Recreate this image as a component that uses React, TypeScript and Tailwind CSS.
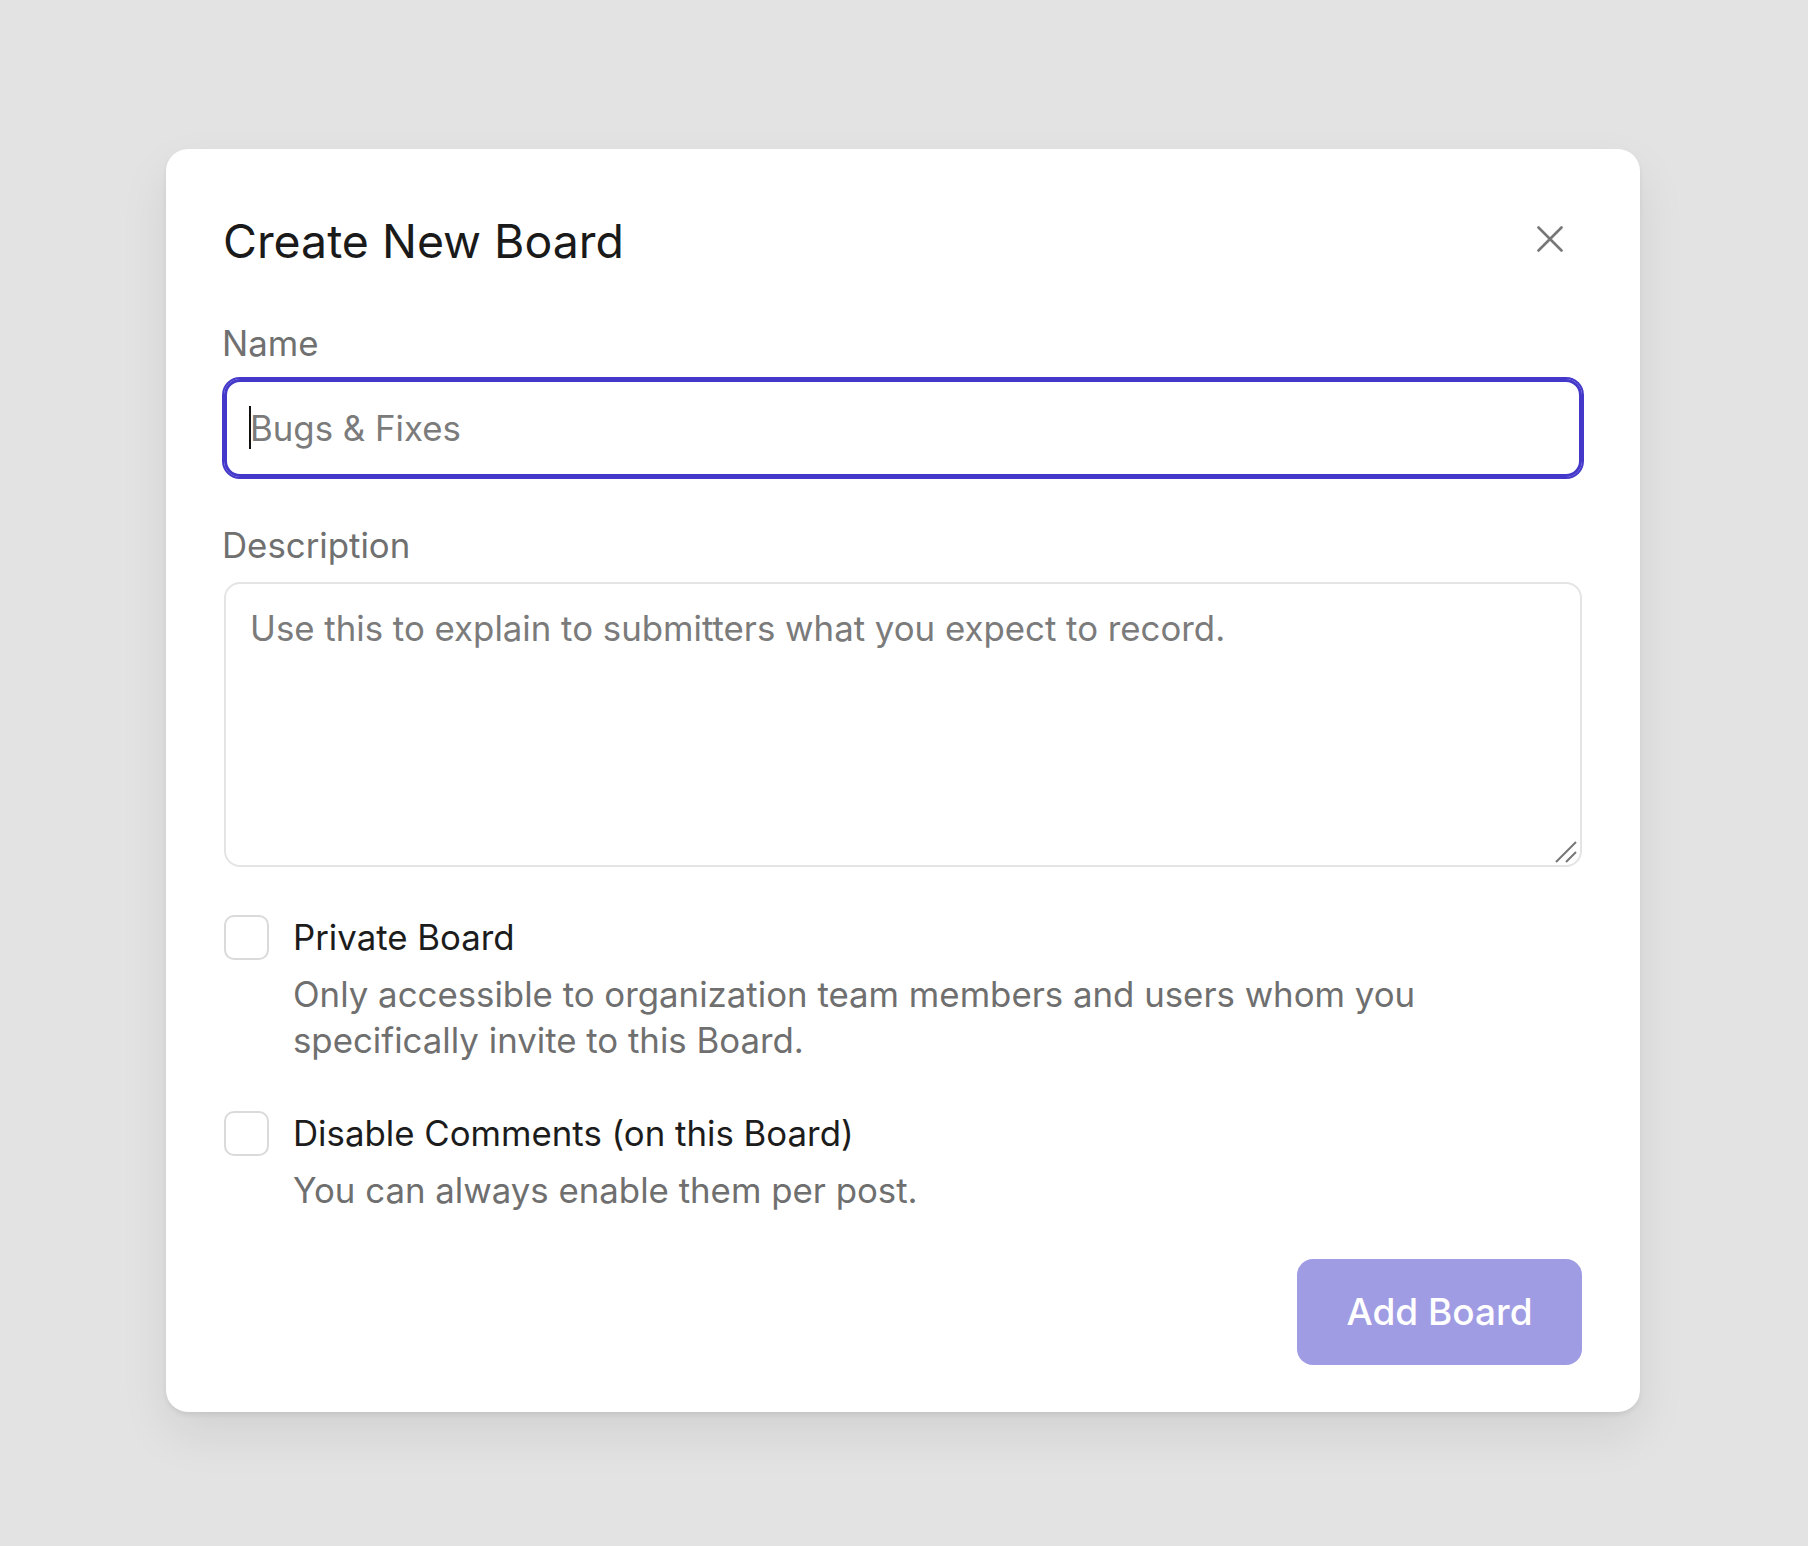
import React from "react";

type OptionRowProps = {
  label: string;
  description: string;
};

function OptionRow({ label, description }: OptionRowProps) {
  return (
    <label className="flex gap-[24px] pl-[2px]">
      <input type="checkbox" className="sr-only" />
      <span className="h-[45px] w-[45px] shrink-0 rounded-[10px] border-2 border-[#dadada] bg-white" />
      <span className="flex flex-col">
        <span className="text-[34.8px] leading-[45px] text-[#1c1c1c]">{label}</span>
        <span className="mt-[11px] text-[34.8px] leading-[46px] text-[#6f6f6f]">{description}</span>
      </span>
    </label>
  );
}

export default function App() {
  return (
    <div className="flex min-h-screen bg-[#e3e3e3] pt-[149px] pb-[134px] pl-[166px] font-['Inter',sans-serif]">
      <div className="w-[1474px] rounded-[22px] bg-white px-[56px] pt-[64px] pb-[46px] shadow-[0_3px_5px_rgba(0,0,0,0.07),0_22px_50px_rgba(0,0,0,0.08)]">
        <div className="flex h-[56px] items-center justify-between">
          <h2 className="pl-[1px] text-[46.4px] leading-[56px] font-normal text-[#1a1a1a]">Create New Board</h2>
          <button type="button" aria-label="Close" className="mr-[21px] mb-[4px] h-[26px] w-[26px]">
            <svg viewBox="0 0 26 26" width="26" height="26" fill="none" stroke="#777777" strokeWidth="2.6" strokeLinecap="round">
              <path d="M1.5 1.5L24.5 24.5M24.5 1.5L1.5 24.5" />
            </svg>
          </button>
        </div>

        <div className="mt-[54px] text-[34.8px] leading-[40px] text-[#707070]">Name</div>
        <div className="relative mx-[2px] mt-[16px]">
          <input
            type="text"
            placeholder="Bugs & Fixes"
            className="h-[98px] w-full rounded-[16px] border-[3px] border-[#4338ca] pl-[23px] pr-[23px] text-[34.8px] text-[#1a1a1a] ring-2 ring-[#4338ca] outline-none placeholder:text-[#7b7b7b]"
          />
          <span className="absolute top-[27px] left-[25px] h-[43px] w-[2px] bg-[#111111]" />
        </div>

        <div className="mt-[48px] text-[34.8px] leading-[40px] text-[#707070]">Description</div>
        <div className="relative mx-[2px] mt-[17px]">
          <textarea
            placeholder="Use this to explain to submitters what you expect to record."
            className="block h-[285px] w-full resize-none rounded-[16px] border-2 border-[#e4e4e4] px-[24px] pt-[18px] text-[34.8px] leading-[1.5] text-[#1a1a1a] outline-none placeholder:text-[#7b7b7b]"
          />
          <svg
            className="pointer-events-none absolute right-[5px] bottom-[4px]"
            width="24"
            height="24"
            viewBox="0 0 24 24"
            fill="none"
            stroke="#777777"
            strokeWidth="2"
          >
            <path d="M3 23L23 3M13 23L23 13" />
          </svg>
        </div>

        <div className="mt-[48px]">
          <OptionRow
            label="Private Board"
            description="Only accessible to organization team members and users whom you specifically invite to this Board."
          />
        </div>
        <div className="mt-[48px]">
          <OptionRow label="Disable Comments (on this Board)" description="You can always enable them per post." />
        </div>

        <div className="mt-[46px] mr-[2px] flex justify-end">
          <button
            type="button"
            className="h-[106px] w-[285px] rounded-[16px] bg-[#a09ce4] text-[37px] font-medium text-white"
          >
            Add Board
          </button>
        </div>
      </div>
    </div>
  );
}
